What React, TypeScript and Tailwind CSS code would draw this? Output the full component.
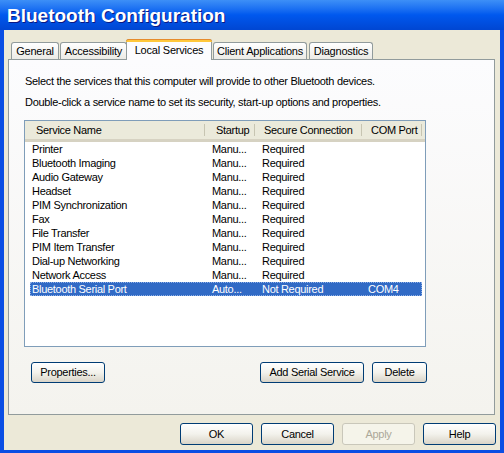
import type { ReactNode } from 'react'

const services: [string, string, string, string][] = [
  ['Printer', 'Manu...', 'Required', ''],
  ['Bluetooth Imaging', 'Manu...', 'Required', ''],
  ['Audio Gateway', 'Manu...', 'Required', ''],
  ['Headset', 'Manu...', 'Required', ''],
  ['PIM Synchronization', 'Manu...', 'Required', ''],
  ['Fax', 'Manu...', 'Required', ''],
  ['File Transfer', 'Manu...', 'Required', ''],
  ['PIM Item Transfer', 'Manu...', 'Required', ''],
  ['Dial-up Networking', 'Manu...', 'Required', ''],
  ['Network Access', 'Manu...', 'Required', ''],
  ['Bluetooth Serial Port', 'Auto...', 'Not Required', 'COM4'],
]

function XpButton({
  children,
  width,
  height = 'h-[21px]',
  disabled = false,
}: {
  children: ReactNode
  width: string
  height?: string
  disabled?: boolean
}) {
  return (
    <button
      type="button"
      disabled={disabled}
      className={`${width} ${height} flex items-center justify-center rounded-[3px] border text-[11px] tracking-[-0.3px] ${
        disabled
          ? 'border-[#c9c7ba] bg-[#f5f4ea] text-[#aca899]'
          : 'border-[#003c74] bg-linear-to-b from-white via-[#f3f2ec] to-[#d9d4c8] text-black'
      }`}
    >
      {children}
    </button>
  )
}

function Tab({ label, width, className = '' }: { label: string; width: string; className?: string }) {
  return (
    <div
      className={`${width} ${className} flex h-[17px] items-center justify-center rounded-t-[3px] border border-b-0 border-[#919b9c] bg-linear-to-b from-white to-[#ecebe6] text-[11px] tracking-[-0.2px] text-black`}
    >
      {label}
    </div>
  )
}

export default function App() {
  return (
    <div className="flex h-[453px] w-[504px] flex-col bg-[#0a4ee4] font-['Liberation_Sans',Arial,sans-serif]">
      {/* title bar */}
      <div className="flex h-[30px] items-center bg-linear-to-b from-[#3d8ff7] via-[#0058ee] to-[#0046d2] pl-[7px]">
        <span className="text-[19px] font-bold leading-none text-white [text-shadow:1px_1px_0_#0a1883]">
          Bluetooth Configuration
        </span>
      </div>

      <div className="mx-[4px] mb-[3px] flex flex-1 flex-col bg-[#ece9d8]">
        {/* tabs */}
        <div className="relative z-10 mt-[9px] flex h-[21px] items-end pl-[7px]">
          <Tab label="General" width="w-[48px]" className="mb-px" />
          <Tab label="Accessibility" width="w-[67px]" className="mb-px ml-px" />
          <div className="-ml-px flex h-[21px] w-[86px] flex-col rounded-t-[3px] border border-b-0 border-[#919b9c] bg-[#fcfcfe]">
            <div className="-mx-px -mt-px h-[3px] rounded-t-[3px] border-t border-[#e68b2c] bg-[#ffc83c]" />
            <div className="flex flex-1 items-center justify-center pb-[2px] text-[11px] tracking-[-0.2px] text-black">
              Local Services
            </div>
          </div>
          <Tab label="Client Applications" width="w-[94px]" className="mb-px ml-px" />
          <Tab label="Diagnostics" width="w-[64px]" className="mb-px ml-[2px]" />
        </div>

        {/* tab panel */}
        <div className="-mt-px ml-[4px] flex h-[356px] w-[487px] flex-col border border-[#919b9c] bg-linear-to-b from-[#fcfcfe] to-[#f4f3ee] pl-[16px] pt-[14px]">
          <p className="text-[11px] leading-[14px] tracking-[-0.3px] text-black">
            Select the services that this computer will provide to other Bluetooth devices.
          </p>
          <p className="mt-[7px] text-[11px] leading-[14px] tracking-[-0.3px] text-black">
            Double-click a service name to set its security, start-up options and properties.
          </p>

          {/* list view */}
          <div className="-ml-px mt-[11px] h-[227px] w-[402px] border border-[#7f9db9] bg-white">
            <div className="flex h-[21px] border-b-[3px] border-[#d6d2c2] bg-[#ebeadb] text-[11px] tracking-[-0.3px] text-black">
              <div className="flex w-[180px] items-center border-r border-[#c7c5b2] pl-[11px] my-[3px]">Service Name</div>
              <div className="flex w-[50px] items-center border-r border-[#c7c5b2] pl-[11px] my-[3px]">Startup</div>
              <div className="flex w-[107px] items-center border-r border-[#c7c5b2] pl-[9px] my-[3px]">Secure Connection</div>
              <div className="flex w-[60px] items-center border-r border-[#c7c5b2] pl-[9px] my-[3px]">COM Port</div>
            </div>
            <ul className="pl-[5px]">
              {services.map(([name, startup, secure, port], i) => {
                const selected = i === services.length - 1
                return (
                  <li
                    key={name}
                    className={`flex h-[14px] w-[392px] items-center text-[11px] leading-[14px] tracking-[-0.3px] ${
                      selected ? 'bg-[#316ac5] text-white outline-1 outline-dotted -outline-offset-1 outline-[#8fb0e6]' : 'text-black'
                    }`}
                  >
                    <span className="w-[180px] pl-[2px]">{name}</span>
                    <span className="w-[50px] pl-[2px]">{startup}</span>
                    <span className="w-[106px] pl-[2px]">{secure}</span>
                    <span className="pl-[2px]">{port}</span>
                  </li>
                )
              })}
            </ul>
          </div>

          <div className="mt-[15px] flex w-[402px] items-center pl-[6px]">
            <XpButton width="w-[74px]">Properties...</XpButton>
            <div className="ml-auto flex gap-[8px]">
              <XpButton width="w-[104px]">Add Serial Service</XpButton>
              <XpButton width="w-[55px]">Delete</XpButton>
            </div>
          </div>
        </div>

        {/* dialog buttons */}
        <div className="mt-[8px] flex justify-end gap-[8px] pr-[4px]">
          <XpButton width="w-[73px]" height="h-[22px]">OK</XpButton>
          <XpButton width="w-[73px]" height="h-[22px]">Cancel</XpButton>
          <XpButton width="w-[73px]" height="h-[22px]" disabled>
            Apply
          </XpButton>
          <XpButton width="w-[73px]" height="h-[22px]">Help</XpButton>
        </div>
      </div>
    </div>
  )
}
